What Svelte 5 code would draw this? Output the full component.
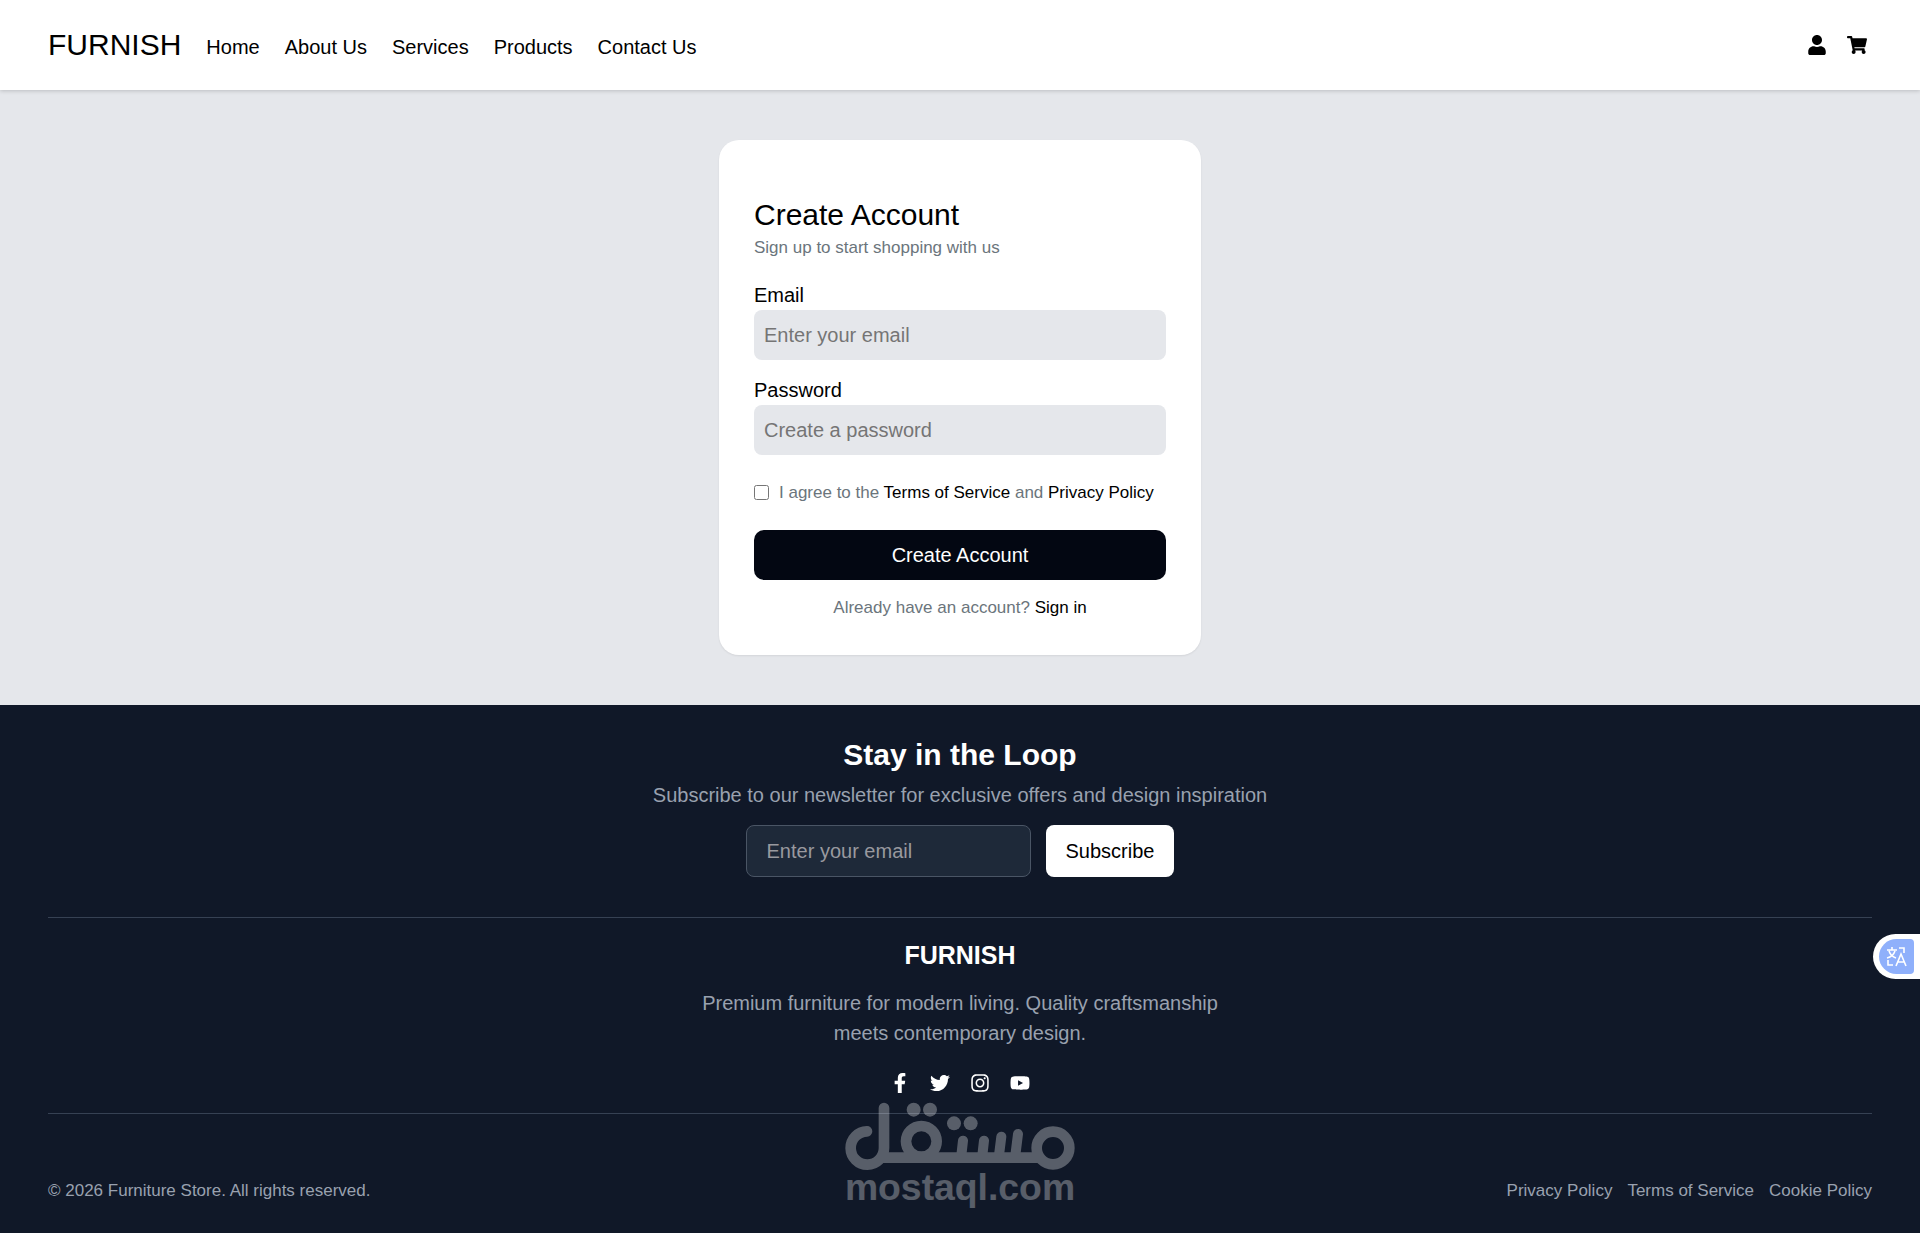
<script lang="ts">
  const navLinks = ['Home', 'About Us', 'Services', 'Products', 'Contact Us']
  const legalLinks = ['Privacy Policy', 'Terms of Service', 'Cookie Policy']

  const icons = {
    user: {
      box: '0 0 448 512',
      path: 'M224 256c70.7 0 128-57.3 128-128S294.7 0 224 0 96 57.3 96 128s57.3 128 128 128zm89.6 32h-16.7c-22.2 10.2-46.9 16-72.9 16s-50.6-5.8-72.9-16h-16.7C60.2 288 0 348.2 0 422.4V464c0 26.5 21.5 48 48 48h352c26.5 0 48-21.5 48-48v-41.6c0-74.2-60.2-134.4-134.4-134.4z',
    },
    cart: {
      box: '0 0 576 512',
      path: 'M528.12 301.319l47.273-208C578.806 78.301 567.391 64 551.99 64H159.208l-9.166-44.81C147.758 8.021 137.93 0 126.529 0H24C10.745 0 0 10.745 0 24v16c0 13.255 10.745 24 24 24h69.883l70.248 343.435C147.325 417.1 136 435.222 136 456c0 30.928 25.072 56 56 56s56-25.072 56-56c0-15.674-6.447-29.835-16.824-40h209.647C430.447 426.165 424 440.326 424 456c0 30.928 25.072 56 56 56s56-25.072 56-56c0-22.172-12.888-41.332-31.579-50.405l5.517-24.276c3.413-15.018-8.002-29.319-23.403-29.319H218.117l-6.545-32h293.145c11.206 0 20.92-7.754 23.403-18.681z',
    },
  }

  const socials = [
    {
      name: 'Facebook',
      box: '0 0 320 512',
      path: 'M279.14 288l14.22-92.66h-88.91v-60.13c0-25.35 12.42-50.06 52.24-50.06h40.42V6.26S260.43 0 225.36 0c-73.22 0-121.08 44.38-121.08 124.72v70.62H22.89V288h81.39v224h100.17V288z',
    },
    {
      name: 'Twitter',
      box: '0 0 512 512',
      path: 'M459.37 151.716c.325 4.548.325 9.097.325 13.645 0 138.72-105.583 298.558-298.558 298.558-59.452 0-114.68-17.219-161.137-47.106 8.447.974 16.568 1.299 25.34 1.299 49.055 0 94.213-16.568 130.274-44.832-46.132-.975-84.792-31.188-98.112-72.772 6.498.974 12.995 1.624 19.818 1.624 9.421 0 18.843-1.3 27.614-3.573-48.081-9.747-84.143-51.98-84.143-102.985v-1.299c13.969 7.797 30.214 12.67 47.431 13.319-28.264-18.843-46.781-51.005-46.781-87.391 0-19.492 5.197-37.36 14.294-52.954 51.655 63.675 129.3 105.258 216.365 109.807-1.624-7.797-2.599-15.918-2.599-24.04 0-57.828 46.782-104.934 104.934-104.934 30.213 0 57.502 12.67 76.67 33.137 23.715-4.548 46.456-13.32 66.599-25.34-7.798 24.366-24.366 44.833-46.132 57.827 21.117-2.273 41.584-8.122 60.426-16.243-14.292 20.791-32.161 39.308-52.628 54.253z',
    },
    {
      name: 'Instagram',
      box: '0 0 448 512',
      path: 'M224.1 141c-63.6 0-114.9 51.3-114.9 114.9s51.3 114.9 114.9 114.9S339 319.5 339 255.9 287.7 141 224.1 141zm0 189.6c-41.1 0-74.7-33.5-74.7-74.7s33.5-74.7 74.7-74.7 74.7 33.5 74.7 74.7-33.6 74.7-74.7 74.7zm146.4-194.3c0 14.9-12 26.8-26.8 26.8-14.9 0-26.8-12-26.8-26.8s12-26.8 26.8-26.8 26.8 12 26.8 26.8zm76.1 27.2c-1.7-35.9-9.9-67.7-36.2-93.9-26.2-26.2-58-34.4-93.9-36.2-37-2.1-147.9-2.1-184.9 0-35.8 1.7-67.6 9.9-93.9 36.1s-34.4 58-36.2 93.9c-2.1 37-2.1 147.9 0 184.9 1.7 35.9 9.9 67.7 36.2 93.9s58 34.4 93.9 36.2c37 2.1 147.9 2.1 184.9 0 35.9-1.7 67.7-9.9 93.9-36.2 26.2-26.2 34.4-58 36.2-93.9 2.1-37 2.1-147.8 0-184.8zM398.8 388c-7.8 19.6-22.9 34.7-42.6 42.6-29.5 11.7-99.5 9-132.1 9s-102.7 2.6-132.1-9c-19.6-7.8-34.7-22.9-42.6-42.6-11.7-29.5-9-99.5-9-132.1s-2.6-102.7 9-132.1c7.8-19.6 22.9-34.7 42.6-42.6 29.5-11.7 99.5-9 132.1-9s102.7-2.6 132.1 9c19.6 7.8 34.7 22.9 42.6 42.6 11.7 29.5 9 99.5 9 132.1s2.7 102.7-9 132.1z',
    },
    {
      name: 'YouTube',
      box: '0 0 576 512',
      path: 'M549.655 124.083c-6.281-23.65-24.787-42.276-48.284-48.597C458.781 64 288 64 288 64S117.22 64 74.629 75.486c-23.497 6.322-42.003 24.947-48.284 48.597-11.412 42.867-11.412 132.305-11.412 132.305s0 89.438 11.412 132.305c6.281 23.65 24.787 41.5 48.284 47.821C117.22 448 288 448 288 448s170.78 0 213.371-11.486c23.497-6.321 42.003-24.171 48.284-47.821 11.412-42.867 11.412-132.305 11.412-132.305s0-89.438-11.412-132.305zm-317.51 213.508V175.185l142.739 81.205-142.739 81.201z',
    },
  ]

  let email = $state('')
  let password = $state('')
  let agreed = $state(false)
  let newsletterEmail = $state('')

  const onsubmit = (e: SubmitEvent) => e.preventDefault()
</script>

<div class="page">
  <header class="header">
    <a class="logo" href="#top">FURNISH</a>
    <nav class="nav">
      {#each navLinks as link}
        <a href="#top">{link}</a>
      {/each}
    </nav>
    <div class="actions">
      <a href="#account" aria-label="Account">
        <svg class="icon" viewBox={icons.user.box}><path d={icons.user.path} /></svg>
      </a>
      <a href="#cart" aria-label="Cart">
        <svg class="icon" viewBox={icons.cart.box}><path d={icons.cart.path} /></svg>
      </a>
    </div>
  </header>

  <main class="main">
    <form class="card" {onsubmit}>
      <h1>Create Account</h1>
      <p class="muted">Sign up to start shopping with us</p>

      <div class="fields">
        <div class="field">
          <label for="email">Email</label>
          <input id="email" type="email" placeholder="Enter your email" bind:value={email} />
        </div>
        <div class="field">
          <label for="password">Password</label>
          <input id="password" type="password" placeholder="Create a password" bind:value={password} />
        </div>
      </div>

      <div class="terms muted">
        <input id="terms" type="checkbox" bind:checked={agreed} />
        <label for="terms">I agree to the <a href="#terms">Terms of Service</a> and <a href="#privacy">Privacy Policy</a></label>
      </div>

      <button class="submit" type="submit">Create Account</button>
      <p class="signin muted">Already have an account? <a href="#signin">Sign in</a></p>
    </form>
  </main>

  <footer class="footer">
    <section class="newsletter">
      <h2>Stay in the Loop</h2>
      <p>Subscribe to our newsletter for exclusive offers and design inspiration</p>
      <form class="subscribe" {onsubmit}>
        <input type="email" placeholder="Enter your email" aria-label="Newsletter email" bind:value={newsletterEmail} />
        <button type="submit">Subscribe</button>
      </form>
    </section>

    <section class="about">
      <h3>FURNISH</h3>
      <p>Premium furniture for modern living. Quality craftsmanship meets contemporary design.</p>
      <div class="socials">
        {#each socials as social}
          <a href="#social" aria-label={social.name}>
            <svg class="icon" viewBox={social.box}><path d={social.path} /></svg>
          </a>
        {/each}
      </div>
    </section>

    <div class="bottom">
      <p>© 2026 Furniture Store. All rights reserved.</p>
      <div class="legal">
        {#each legalLinks as link}
          <a href="#legal">{link}</a>
        {/each}
      </div>
    </div>

    <svg class="watermark" viewBox="75 50 690 330" aria-label="mostaql.com">
      <g fill="none" stroke="#fff" stroke-width="32" stroke-linecap="round">
        <path d="M141 138A50 50 0 1 0 192 188V68" />
        <path d="M180 217H665" stroke-linecap="butt" />
        <circle cx="304" cy="168" r="46" />
        <circle cx="699" cy="188" r="49" />
        <path d="M429 166L424 210M492 166L487 210M544 154L537 210M594 146L586 210" stroke-width="30" />
      </g>
      <g fill="#fff">
        <circle cx="281" cy="73" r="21" />
        <circle cx="330" cy="73" r="21" />
        <circle cx="402" cy="114" r="21" />
        <circle cx="452" cy="114" r="21" />
        <text x="420" y="345" text-anchor="middle">mostaql.com</text>
      </g>
    </svg>
  </footer>

  <button class="translate" aria-label="Translate page">
    <span class="translate-icon">
      <svg viewBox="0 0 35 35" fill="none" stroke="#fff" stroke-width="1.6">
        <path d="M8 11H18M13 8V11M10 12C11 15 14 18 17 19M16 12C15 15 12 18 8 19" />
        <path d="M20 9H25V14M9 21V26H14" />
        <path d="M17 27L22 15L27 27M19 23H25" />
      </svg>
    </span>
  </button>
</div>

<style>
  :global(body) {
    margin: 0;
    background: #101828;
  }

  .page,
  .page * {
    box-sizing: border-box;
  }

  .page {
    font-family: 'Liberation Sans', Arial, sans-serif;
    font-size: 20px;
    line-height: 30px;
    color: #000;
  }

  h1,
  h2,
  h3,
  p {
    margin: 0;
  }

  a {
    color: inherit;
    text-decoration: none;
  }

  input,
  button {
    font: inherit;
    border: 0;
  }

  input::placeholder {
    color: #757575;
    opacity: 1;
  }

  button {
    cursor: pointer;
  }

  .icon {
    display: block;
    width: 20px;
    height: 20px;
    fill: currentColor;
  }

  .header {
    position: relative;
    display: flex;
    align-items: center;
    gap: 25px;
    padding: 25px 53px 25px 48px;
    background: #fff;
    box-shadow: 0 1px 4px rgba(0, 0, 0, 0.18);
  }

  .logo {
    font-size: 30px;
    line-height: 40px;
  }

  .nav {
    display: flex;
    gap: 25px;
    padding-top: 4px;
  }

  .actions {
    display: flex;
    gap: 20px;
    margin-left: auto;
  }

  .main {
    display: flex;
    justify-content: center;
    padding: 50px 20px;
    background: #e5e7eb;
  }

  .card {
    width: 482px;
    padding: 55px 35px 35px;
    background: #fff;
    border-radius: 20px;
    box-shadow: 0 1px 2px rgba(0, 0, 0, 0.08);
  }

  h1 {
    font-size: 30px;
    line-height: 40px;
    font-weight: 400;
  }

  .muted {
    font-size: 17px;
    line-height: 25px;
    color: #6b757c;
  }

  .muted a {
    color: #000;
  }

  .fields {
    display: flex;
    flex-direction: column;
    gap: 15px;
    margin-top: 20px;
  }

  .field {
    display: flex;
    flex-direction: column;
  }

  .field input {
    height: 50px;
    padding: 10px;
    background: #e5e7eb;
    border-radius: 8px;
  }

  .terms {
    display: flex;
    align-items: center;
    gap: 10px;
    margin: 25px 0;
  }

  .terms input {
    flex-shrink: 0;
    width: 15px;
    height: 15px;
    margin: 0;
  }

  .submit {
    display: block;
    width: 100%;
    height: 50px;
    color: #fff;
    background: #030712;
    border-radius: 10px;
  }

  .signin {
    margin-top: 15px;
    text-align: center;
  }

  .footer {
    position: relative;
    padding: 30px 48px;
    color: #99a1af;
    background: #101828;
  }

  .newsletter {
    padding-bottom: 40px;
    text-align: center;
  }

  h2 {
    margin-bottom: 5px;
    font-size: 30px;
    line-height: 40px;
    color: #fff;
  }

  .subscribe {
    display: flex;
    justify-content: center;
    gap: 15px;
    margin-top: 15px;
  }

  .subscribe input {
    width: 285px;
    height: 52px;
    padding: 10px 20px;
    color: #fff;
    background: #1e2939;
    border: 1px solid #4a5565;
    border-radius: 8px;
  }

  .subscribe input::placeholder {
    color: #99999f;
  }

  .subscribe button {
    padding: 0 20px;
    color: #000;
    background: #fff;
    border-radius: 8px;
  }

  .about {
    display: flex;
    flex-direction: column;
    align-items: center;
    padding: 20px 0;
    border: 1px solid #364153;
    border-width: 1px 0;
    text-align: center;
  }

  h3 {
    margin-bottom: 15px;
    font-size: 25px;
    line-height: 35px;
    color: #fff;
  }

  .about p {
    max-width: 560px;
  }

  .socials {
    display: flex;
    gap: 20px;
    margin-top: 25px;
    color: #fff;
  }

  .bottom {
    display: flex;
    justify-content: space-between;
    padding-top: 64px;
    font-size: 17px;
    line-height: 25px;
  }

  .legal {
    display: flex;
    gap: 15px;
  }

  .watermark {
    position: absolute;
    bottom: 21px;
    left: 50%;
    width: 230px;
    height: 110px;
    margin-left: -115px;
    opacity: 0.3;
    pointer-events: none;
  }

  .watermark text {
    font-size: 112px;
    font-weight: 700;
  }

  .translate {
    position: fixed;
    top: 934px;
    right: 0;
    width: 47px;
    height: 45px;
    padding: 5px 6px;
    background: #fff;
    border-radius: 23px 0 0 23px;
  }

  .translate-icon {
    display: block;
    width: 35px;
    height: 35px;
    background: #8fb0fb;
    border-radius: 18px 4px 4px 18px;
  }

  .translate-icon svg {
    display: block;
  }
</style>
